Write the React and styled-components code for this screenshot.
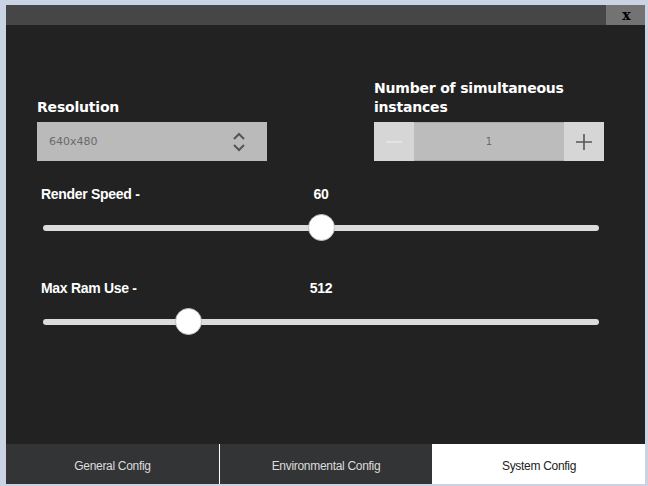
import React, { useState } from "react";
import styled, { createGlobalStyle } from "styled-components";

const GlobalStyle = createGlobalStyle`
  html, body {
    margin: 0;
    padding: 0;
    background: #c9d3e3;
  }
  body {
    font-family: "DejaVu Sans", sans-serif;
  }
`;

const App = () => {
    const [speed, setSpeed] = useState(60);
    const [ram, setRam] = useState(512);
    const [instances, setInstances] = useState(1);
    const [tab, setTab] = useState("system");

    return (
        <>
            <GlobalStyle />
            <Window>
                <TitleBar>
                    <CloseBtn>x</CloseBtn>
                </TitleBar>

                <Body>
                    <TopRow>
                        <Field>
                            <FieldLabel>Resolution</FieldLabel>
                            <Select>
                                <span>640x480</span>
                                <svg width="14" height="20" viewBox="0 0 14 20" fill="none">
                                    <path d="M2 7 L7 2 L12 7" stroke="#555" strokeWidth="2" />
                                    <path d="M2 13 L7 18 L12 13" stroke="#555" strokeWidth="2" />
                                </svg>
                            </Select>
                        </Field>
                        <Field>
                            <FieldLabel>Number of simultaneous<br />instances</FieldLabel>
                            <Spinner>
                                <SpinBtn
                                    disabled={instances <= 1}
                                    onClick={() => setInstances(instances - 1)}
                                >
                                    <svg width="18" height="18" viewBox="0 0 18 18">
                                        <path d="M1 9 H17" stroke="#e6e6e6" strokeWidth="1.6" />
                                    </svg>
                                </SpinBtn>
                                <SpinValue>{instances}</SpinValue>
                                <SpinBtn onClick={() => setInstances(instances + 1)}>
                                    <svg width="18" height="18" viewBox="0 0 18 18">
                                        <path d="M1 9 H17 M9 1 V17" stroke="#555" strokeWidth="1.6" />
                                    </svg>
                                </SpinBtn>
                            </Spinner>
                        </Field>
                    </TopRow>

                    <SliderBlock gap="25px">
                        <SliderHead>
                            <SliderLabel>Render Speed -</SliderLabel>
                            <SliderValue>{speed}</SliderValue>
                        </SliderHead>
                        <Range
                            type="range"
                            min="0"
                            max="120"
                            value={speed}
                            onChange={(e) => setSpeed(Number(e.target.value))}
                        />
                    </SliderBlock>

                    <SliderBlock gap="38px">
                        <SliderHead>
                            <SliderLabel>Max Ram Use -</SliderLabel>
                            <SliderValue>{ram}</SliderValue>
                        </SliderHead>
                        <Range
                            type="range"
                            min="0"
                            max="2048"
                            value={ram}
                            onChange={(e) => setRam(Number(e.target.value))}
                        />
                    </SliderBlock>
                </Body>

                <Tabs>
                    <Tab active={tab === "general"} onClick={() => setTab("general")}>General Config</Tab>
                    <Tab active={tab === "env"} onClick={() => setTab("env")}>Environmental Config</Tab>
                    <Tab active={tab === "system"} onClick={() => setTab("system")}>System Config</Tab>
                </Tabs>
            </Window>
        </>
    );
};

const Window = styled.div`
  margin: 5px 0 0 6px;
  width: 639px;
  height: 479px;
  background: #222222;
  display: flex;
  flex-direction: column;
`;

const TitleBar = styled.div`
  height: 20px;
  background: #464646;
  display: flex;
  justify-content: flex-end;
`;

const CloseBtn = styled.div`
  width: 39px;
  background: #737373;
  color: #000;
  font-family: "DejaVu Serif", serif;
  font-weight: 700;
  font-size: 14px;
  line-height: 20px;
  text-align: center;
  padding-left: 2px;
  box-sizing: border-box;
`;

const Body = styled.div`
  flex: 1;
  padding: 54px 0 0 31px;
  display: flex;
  flex-direction: column;
`;

const TopRow = styled.div`
  display: flex;
  gap: 107px;
  align-items: flex-end;
`;

const Field = styled.div`
  width: 230px;
  display: flex;
  flex-direction: column;
`;

const FieldLabel = styled.div`
  color: #fff;
  font-weight: 700;
  font-size: 14px;
  letter-spacing: -0.2px;
  line-height: 19px;
  margin-bottom: 5px;
`;

const Select = styled.div`
  height: 39px;
  background: #bababa;
  display: flex;
  align-items: center;
  justify-content: space-between;
  padding: 0 21px 0 12px;
  span {
    color: #6a6a6a;
    font-size: 11px;
  }
`;

const Spinner = styled.div`
  height: 39px;
  display: flex;
  background: #bcbcbc;
`;

const SpinBtn = styled.button`
  width: 40px;
  border: none;
  padding: 0;
  background: #d6d6d6;
  display: flex;
  align-items: center;
  justify-content: center;
  cursor: pointer;
`;

const SpinValue = styled.div`
  flex: 1;
  display: flex;
  align-items: center;
  justify-content: center;
  border-top: 1px solid #a9a9a9;
  border-bottom: 1px solid #a9a9a9;
  color: #6a6a6a;
  font-size: 10px;
`;

const SliderBlock = styled.div`
  width: 556px;
  padding-left: 6px;
  margin-top: ${(p) => p.gap};
`;

const SliderHead = styled.div`
  display: flex;
  align-items: baseline;
  height: 18px;
  position: relative;
  font-family: "Liberation Sans", Arial, sans-serif;
  font-weight: 700;
  font-size: 14px;
  letter-spacing: -0.3px;
  color: #fff;
`;

const SliderLabel = styled.div`
  margin-left: -2px;
`;

const SliderValue = styled.div`
  position: absolute;
  left: 50%;
  transform: translateX(-50%);
`;

const Range = styled.input`
  -webkit-appearance: none;
  appearance: none;
  display: block;
  width: 556px;
  height: 29px;
  margin: 9px 0 0 0;
  background: transparent;

  &::-webkit-slider-runnable-track {
    height: 6px;
    border-radius: 3px;
    background: #dcdcdc;
  }
  &::-webkit-slider-thumb {
    -webkit-appearance: none;
    width: 27px;
    height: 27px;
    margin-top: -11px;
    border-radius: 50%;
    background: #fff;
    border: 1px solid #bdbdbd;
    box-sizing: border-box;
  }
`;

const Tabs = styled.div`
  height: 40px;
  display: grid;
  grid-template-columns: 213px 212px 1fr;
  column-gap: 1px;
  background: #fff;
`;

const Tab = styled.div`
  background: ${(p) => p.active ? "#ffffff" : "#333436"};
  color: ${(p) => p.active ? "#222" : "#dcdcdc"};
  font-family: "Liberation Sans", Arial, sans-serif;
  font-size: 12px;
  letter-spacing: -0.3px;
  padding-top: 4px;
  display: flex;
  align-items: center;
  justify-content: center;
  cursor: pointer;
`;

export default App;
